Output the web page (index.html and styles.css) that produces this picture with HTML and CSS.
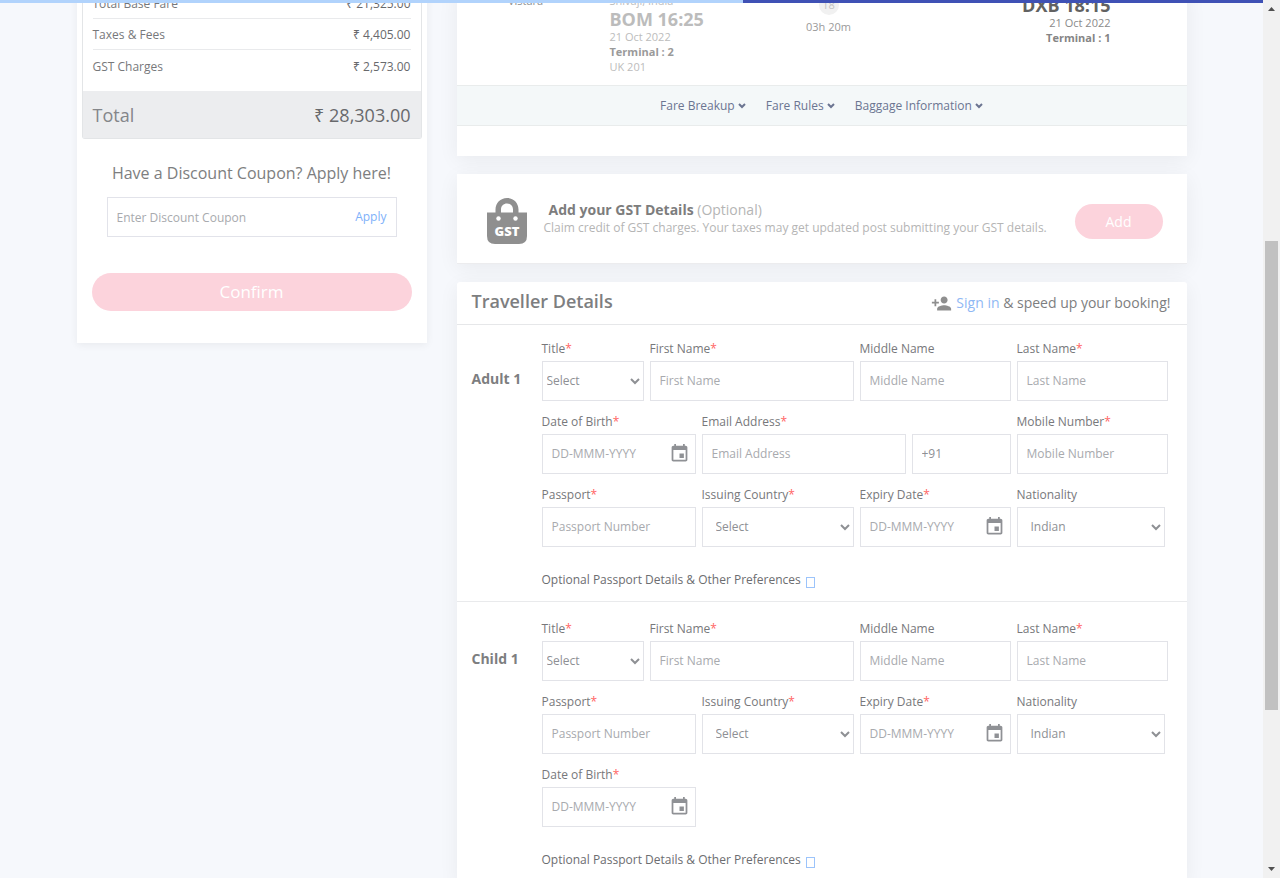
FILE: index.html
```html
<!DOCTYPE html>
<html lang="en">
<head>
<meta charset="utf-8">
<title>Traveller Details</title>
<link rel="stylesheet" href="styles.css">
</head>
<body>
<svg width="0" height="0" class="sprite" aria-hidden="true">
  <symbol id="calendar" viewBox="0 0 24 24"><path d="M17 12h-5v5h5v-5zM16 1v2H8V1H6v2H5c-1.110 0-2 .9-2 2v14c0 1.100.89 2 2 2h14c1.100 0 2-.9 2-2V5c0-1.100-.9-2-2-2h-1V1h-2zm3 18H5V8h14v11z"/></symbol>
  <symbol id="chevron" viewBox="0 0 8 6"><path d="M1 1l3 3 3-3" fill="none" stroke="currentColor" stroke-width="2"/></symbol>
</svg>
<div class="progress"><div class="progress-done"></div></div>
<div class="window">
  <div class="view">
    <div class="container">
      <aside class="summary">
        <div class="fare">
          <div class="fare-row"><span>Total Base Fare</span><span class="amount">₹ 21,325.00</span></div>
          <div class="fare-row"><span>Taxes &amp; Fees</span><span class="amount">₹ 4,405.00</span></div>
          <div class="fare-row"><span>GST Charges</span><span class="amount">₹ 2,573.00</span></div>
          <div class="fare-total"><span>Total</span><span class="amount">₹ 28,303.00</span></div>
        </div>
        <label class="coupon-title" for="coupon">Have a Discount Coupon? Apply here!</label>
        <div class="coupon"><input id="coupon" type="text" placeholder="Enter Discount Coupon"><button class="apply" type="button">Apply</button></div>
        <button class="pill confirm" type="button">Confirm</button>
      </aside>
      <main class="main">
        <section class="card flight">
          <div class="flight-row">
            <div class="airline">Vistara</div>
            <div class="depart">
              <div class="line">Shivaji, India</div>
              <div class="airport">BOM 16:25</div>
              <div class="line">21 Oct 2022</div>
              <div class="terminal">Terminal : 2</div>
              <div class="line">UK 201</div>
            </div>
            <div class="duration"><span class="bubble">18</span><span>03h 20m</span></div>
            <div class="arrive">
              <div class="airport">DXB 18:15</div>
              <div class="line">21 Oct 2022</div>
              <div class="terminal">Terminal : 1</div>
            </div>
          </div>
          <nav class="flight-links">
            <a href="#fare">Fare Breakup <svg class="chev"><use href="#chevron"/></svg></a>
            <a href="#rules">Fare Rules <svg class="chev"><use href="#chevron"/></svg></a>
            <a href="#baggage">Baggage Information <svg class="chev"><use href="#chevron"/></svg></a>
          </nav>
        </section>
        <section class="card gst">
          <svg class="gst-icon" viewBox="0 0 40 46">
            <path fill="#8f8f8f" fill-rule="evenodd" d="M0 14.500H8.500V11.500C8.500 5 13.500 0 20 0S31.500 5 31.500 11.500V14.500H40V38Q40 46 32 46H8Q0 46 0 38ZM14 14.500H26V11.500C26 8 23.500 5.500 20 5.500S14 8 14 11.500Z"/>
            <circle cx="11.500" cy="20.500" r="2.200" fill="#fff"/><circle cx="28.500" cy="20.500" r="2.200" fill="#fff"/>
            <text x="20" y="38" text-anchor="middle" class="gst-mark">GST</text>
          </svg>
          <div class="gst-text">
            <div class="gst-title"><b>Add your GST Details</b> (Optional)</div>
            <div class="gst-note">Claim credit of GST charges. Your taxes may get updated post submitting your GST details.</div>
          </div>
          <button class="pill add" type="button">Add</button>
        </section>
        <section class="card travellers">
          <header class="head">
            <h2>Traveller Details</h2>
            <p><svg class="person" viewBox="0 0 24 24"><path d="M15 12c2.210 0 4-1.790 4-4s-1.790-4-4-4-4 1.790-4 4 1.790 4 4 4zm-9-2V7H4v3H1v2h3v3h2v-3h3v-2H6zm9 4c-2.670 0-8 1.340-8 4v2h16v-2c0-2.660-5.330-4-8-4z"/></svg><a href="#signin">Sign in</a> &amp; speed up your booking!</p>
          </header>
          <div class="traveller">
            <h3>Adult 1</h3>
            <div class="fields">
              <div class="row names">
                <div class="field"><label for="a-title">Title<i>*</i></label><select id="a-title" class="tight"><option>Select</option></select></div>
                <div class="field"><label for="a-first">First Name<i>*</i></label><input id="a-first" type="text" placeholder="First Name"></div>
                <div class="field"><label for="a-mid">Middle Name</label><input id="a-mid" type="text" placeholder="Middle Name"></div>
                <div class="field"><label for="a-last">Last Name<i>*</i></label><input id="a-last" type="text" placeholder="Last Name"></div>
              </div>
              <div class="row contact">
                <div class="field"><label for="a-dob">Date of Birth<i>*</i></label><div class="date"><input id="a-dob" type="text" placeholder="DD-MMM-YYYY"><svg><use href="#calendar"/></svg></div></div>
                <div class="field"><label for="a-mail">Email Address<i>*</i></label><input id="a-mail" type="email" placeholder="Email Address"></div>
                <div class="field no-label"><input id="a-code" type="text" value="+91" aria-label="Country code"></div>
                <div class="field"><label for="a-mobile">Mobile Number<i>*</i></label><input id="a-mobile" type="tel" placeholder="Mobile Number"></div>
              </div>
              <div class="row passport">
                <div class="field"><label for="a-pass">Passport<i>*</i></label><input id="a-pass" type="text" placeholder="Passport Number"></div>
                <div class="field"><label for="a-issue">Issuing Country<i>*</i></label><select id="a-issue"><option>Select</option></select></div>
                <div class="field"><label for="a-exp">Expiry Date<i>*</i></label><div class="date"><input id="a-exp" type="text" placeholder="DD-MMM-YYYY"><svg><use href="#calendar"/></svg></div></div>
                <div class="field narrow"><label for="a-nat">Nationality</label><select id="a-nat"><option>Indian</option></select></div>
              </div>
              <button class="more" type="button">Optional Passport Details &amp; Other Preferences <span class="box"></span></button>
            </div>
          </div>
          <div class="traveller">
            <h3>Child 1</h3>
            <div class="fields">
              <div class="row names">
                <div class="field"><label for="c-title">Title<i>*</i></label><select id="c-title" class="tight"><option>Select</option></select></div>
                <div class="field"><label for="c-first">First Name<i>*</i></label><input id="c-first" type="text" placeholder="First Name"></div>
                <div class="field"><label for="c-mid">Middle Name</label><input id="c-mid" type="text" placeholder="Middle Name"></div>
                <div class="field"><label for="c-last">Last Name<i>*</i></label><input id="c-last" type="text" placeholder="Last Name"></div>
              </div>
              <div class="row passport">
                <div class="field"><label for="c-pass">Passport<i>*</i></label><input id="c-pass" type="text" placeholder="Passport Number"></div>
                <div class="field"><label for="c-issue">Issuing Country<i>*</i></label><select id="c-issue"><option>Select</option></select></div>
                <div class="field"><label for="c-exp">Expiry Date<i>*</i></label><div class="date"><input id="c-exp" type="text" placeholder="DD-MMM-YYYY"><svg><use href="#calendar"/></svg></div></div>
                <div class="field narrow"><label for="c-nat">Nationality</label><select id="c-nat"><option>Indian</option></select></div>
              </div>
              <div class="row contact">
                <div class="field"><label for="c-dob">Date of Birth<i>*</i></label><div class="date"><input id="c-dob" type="text" placeholder="DD-MMM-YYYY"><svg><use href="#calendar"/></svg></div></div>
              </div>
              <button class="more" type="button">Optional Passport Details &amp; Other Preferences <span class="box"></span></button>
            </div>
          </div>
        </section>
      </main>
    </div>
  </div>
  <div class="scrollbar" aria-hidden="true">
    <svg viewBox="0 0 17 17"><path d="M5 11h7L8.500 7z"/></svg>
    <div class="track"><div class="thumb"></div></div>
    <svg viewBox="0 0 17 17"><path d="M5 6h7L8.500 10z"/></svg>
  </div>
</div>
</body>
</html>
```
FILE: styles.css
```css
* { box-sizing: border-box; }
body { margin: 0; background: #f6f8fc; color: #7d7e80; font: 12px/16px "Open Sans", "Noto Sans", sans-serif; }
button, input, select { font: inherit; color: inherit; }
button { border: 0; padding: 0; background: none; cursor: pointer; }
a { text-decoration: none; color: inherit; }
h2, h3, p { margin: 0; }
.sprite { position: absolute; }

.progress { position: fixed; top: 0; left: 0; right: 17px; height: 3px; background: #3f51b5; z-index: 2; }
.progress-done { width: 743px; max-width: 100%; height: 3px; background: #b1d3fc; }

.window { display: flex; height: 100vh; overflow: hidden; }
.view { flex: 1; overflow: hidden; }
.container { display: flex; gap: 30px; align-items: flex-start; max-width: 1110px; margin: -12px auto 0; }

.summary { flex: 0 0 350px; background: #fff; padding: 0 5px 32px; box-shadow: 0 2px 8px rgba(0,0,0,.06); }
.fare { border: 1px solid #e3e5e7; border-top: 0; border-radius: 0 0 3px 3px; }
.fare-row { display: flex; justify-content: space-between; align-items: center; height: 31px; margin: 0 10px; padding-top: 2px; border-bottom: 1px solid #e9eaec; font-size: 12px; color: #77787b; }
.fare-row:nth-child(3) { border: 0; margin-bottom: 10px; }
.amount { color: #68696c; }
.fare-total { display: flex; justify-content: space-between; align-items: center; height: 47px; padding: 0 10px; background: #ecedef; font-size: 18px; color: #84868a; }
.coupon-title { display: block; margin: 22px 0 12px; text-align: center; font-size: 16px; line-height: 24px; }
.coupon { display: flex; height: 40px; margin: 0 25px; border: 1px solid #e2e3ea; }
.coupon input { flex: 1; min-width: 0; border: 0; padding: 2px 9px 0; }
.apply { color: #7eb1fa; padding: 0 9px; }
.pill { background: #fcd3dc; color: #fff; border-radius: 20px; font-weight: 500; }
.confirm { display: block; width: calc(100% - 20px); height: 38px; margin: 36px 10px 0; font-size: 17px; }

.main { flex: 1; min-width: 0; display: flex; flex-direction: column; gap: 18px; }
.card { background: #fff; box-shadow: 0 4px 20px rgba(0,0,0,.06); }
.flight { padding: 5px 0 30px; }
.flight-row { display: grid; grid-template-columns: 108px 153fr 72px 216fr; column-gap: 30px; padding: 0 76px 10px 15px; font-size: 11px; color: #bcbcbc; }
.airline { text-align: center; color: #8d8d8d; }
.terminal { font-weight: 700; line-height: 14px; color: #9a9a9a; }
.airport { font-size: 18px; line-height: 20px; font-weight: 700; }
.duration { display: flex; flex-direction: column; align-items: center; gap: 4px; padding-top: 2px; color: #9a9a9a; }
.bubble { width: 20px; height: 20px; border-radius: 50%; background: #f1f1f1; color: #c4c4c4; text-align: center; line-height: 20px; }
.arrive { padding-top: 2px; text-align: right; color: #8a8a8a; }
.arrive .airport { color: #626262; }
.arrive .terminal { color: #858585; }
.flight-links { display: flex; justify-content: center; align-items: center; gap: 20px; height: 41px; background: #f4f8f9; border: solid #e9ecec; border-width: 1px 0; color: #6b7591; }
.chev { width: 8px; height: 6px; margin-bottom: 1px; }

.gst { display: flex; align-items: center; height: 90px; padding: 0 24px 2px 30px; border-bottom: 1px solid #ececee; }
.gst-icon { width: 40px; height: 46px; margin-top: 7px; }
.gst-mark { fill: #fff; font: 800 13px "Open Sans", sans-serif; }
.gst-text { flex: 1; margin-left: 17px; color: #b5b5b5; }
.gst-title { padding-left: 5px; font-size: 14px; line-height: 19px; }
.gst-title b { color: #7d7d7d; }
.gst-note { line-height: 17px; }
.add { width: 88px; height: 35px; margin-top: 7px; padding-top: 1px; font-size: 14px; }

.travellers { border-radius: 3px; }
.head { display: flex; justify-content: space-between; align-items: center; height: 43px; padding: 0 16px 4px 15px; border-bottom: 1px solid #e6e7e9; }
.head h2 { font-size: 18px; font-weight: 600; }
.head p { display: flex; align-items: center; gap: 4px; padding-top: 4px; font-size: 14px; white-space: pre; }
.head p a { color: #8fb8f4; margin-right: -4px; }
.person { width: 21px; height: 21px; fill: #8f8f8f; }
.traveller { display: flex; padding: 17px 13px 11px 15px; border-bottom: 1px solid #e9eaec; }
.traveller:nth-child(2) { padding-top: 14px; }
.traveller h3 { flex: 0 0 70px; padding-top: 30px; font-size: 14px; line-height: 20px; }
.fields { flex: 1; min-width: 0; }
.row { display: grid; margin-bottom: 11px; }
.names { grid-template-columns: 108fr 210fr 157fr 157fr; }
.contact { grid-template-columns: 160fr 210fr 105fr 157fr; }
.passport { grid-template-columns: 160fr 158fr 157fr 157fr; }
.field { min-width: 0; padding-right: 6px; }
.no-label { padding-top: 22px; }
.narrow { padding-right: 9px; }
.field label { display: block; line-height: 20px; margin-bottom: 2px; color: #77787b; font-weight: 500; white-space: nowrap; }
.field i { color: #ff6464; font-style: normal; }
.field input, .field select { display: block; width: 100%; height: 40px; border: 1px solid #e2e3e8; border-radius: 0; background: #fff; padding: 0 9px 1px; color: #8e9094; }
.field select.tight { padding: 0 0 1px; }
input::placeholder { color: #a8aaae; opacity: 1; }
.date { position: relative; }
.date svg { position: absolute; right: 6px; top: 9px; width: 21px; height: 21px; fill: #8f9195; pointer-events: none; }
.more { display: flex; align-items: center; gap: 5px; height: 20px; margin-top: 23px; color: #6c6d70; }
.box { width: 9px; height: 11px; margin-top: 4px; border: 1px solid #9cc4fb; }

.scrollbar { display: flex; flex-direction: column; flex: 0 0 17px; background: #f1f1f1; }
.scrollbar svg { width: 17px; height: 17px; fill: #505050; }
.track { flex: 1; display: grid; grid-template-rows: 224fr 469fr 151fr; padding: 0 2px; }
.thumb { grid-row: 2; background: #c1c1c1; }
```
